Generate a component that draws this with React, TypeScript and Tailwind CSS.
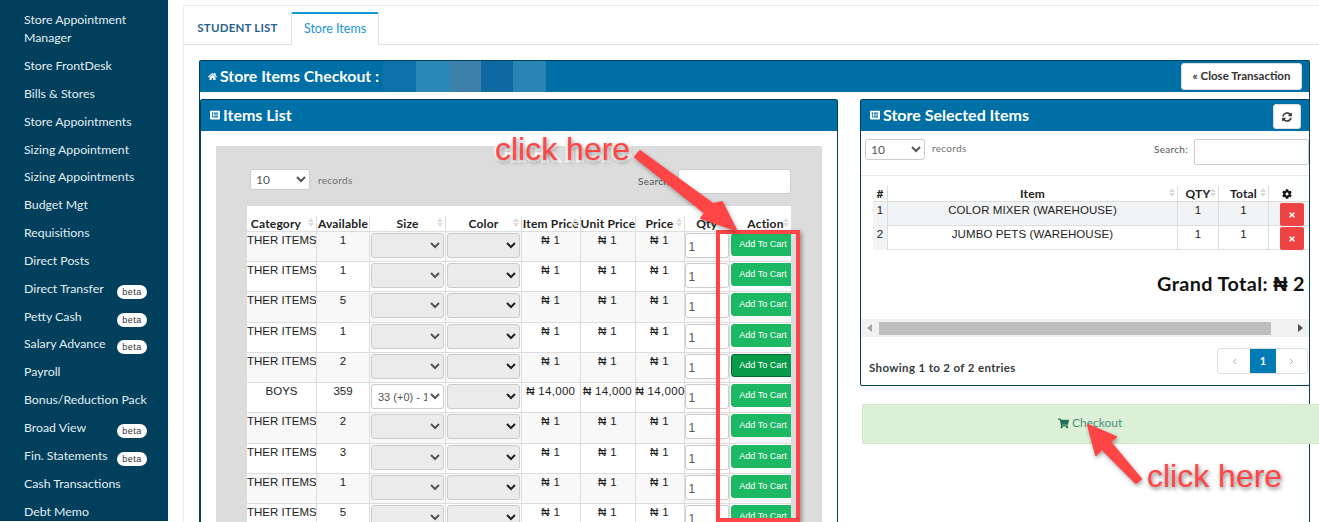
import { FaCog, FaHome, FaListAlt, FaShoppingCart, FaSyncAlt, FaTimes } from 'react-icons/fa';
import { ChevronLeft, ChevronRight } from 'lucide-react';

const sideItems = [
  { label: 'Store FrontDesk' },
  { label: 'Bills & Stores' },
  { label: 'Store Appointments' },
  { label: 'Sizing Appointment' },
  { label: 'Sizing Appointments' },
  { label: 'Budget Mgt' },
  { label: 'Requisitions' },
  { label: 'Direct Posts' },
  { label: 'Direct Transfer', beta: true },
  { label: 'Petty Cash', beta: true },
  { label: 'Salary Advance', beta: true },
  { label: 'Payroll' },
  { label: 'Bonus/Reduction Pack' },
  { label: 'Broad View', beta: true },
  { label: 'Fin. Statements', beta: true },
  { label: 'Cash Transactions' },
  { label: 'Debt Memo' },
];

const rows = [
  { cat: 'THER ITEMS', avail: '1', price: '₦ 1' },
  { cat: 'THER ITEMS', avail: '1', price: '₦ 1' },
  { cat: 'THER ITEMS', avail: '5', price: '₦ 1' },
  { cat: 'THER ITEMS', avail: '1', price: '₦ 1' },
  { cat: 'THER ITEMS', avail: '2', price: '₦ 1', active: true },
  { cat: 'BOYS', avail: '359', price: '₦ 14,000', size: '33 (+0) - 18,000' },
  { cat: 'THER ITEMS', avail: '2', price: '₦ 1' },
  { cat: 'THER ITEMS', avail: '3', price: '₦ 1' },
  { cat: 'THER ITEMS', avail: '1', price: '₦ 1' },
  { cat: 'THER ITEMS', avail: '5', price: '₦ 1' },
];

const itemCols = 'grid grid-cols-[70px_53px_76px_76px_58.5px_55px_49px_45.5px_61px]';
const selectedCols = 'grid grid-cols-[15px_290px_41px_50px_35px]';

const SortMark = () => (
  <span className="absolute right-[2px] top-[2px] flex flex-col gap-[1px]">
    <span className="h-0 w-0 border-x-[3px] border-b-[4px] border-x-transparent border-b-[#dcdcdc]" />
    <span className="h-0 w-0 border-x-[3px] border-t-[4px] border-x-transparent border-t-[#dcdcdc]" />
  </span>
);

const Head = ({ label, sort = true, className = '' }: { label: React.ReactNode; sort?: boolean; className?: string }) => (
  <div
    className={`relative h-[15px] border-r border-[#dddddd] pt-px text-center font-['Lato',sans-serif] text-[12px] leading-[14px] font-bold tracking-[0.2px] whitespace-nowrap text-[#222222] last:border-r-0 ${className}`}
  >
    {label}
    {sort && <SortMark />}
  </div>
);

const LengthSelect = ({ className }: { className: string }) => (
  <select
    defaultValue="10"
    className={`rounded-[3px] border border-[#cccccc] bg-white pl-px text-[12px] text-[#555555] ${className}`}
  >
    <option>10</option>
  </select>
);

const ItemRow = ({ row, index }: { row: (typeof rows)[number]; index: number }) => (
  <div
    className={`${itemCols} h-[30.25px] border-b border-[#dddddd] font-['Liberation_Sans',sans-serif] text-[11.5px] leading-[14px] text-[#222222] ${
      index % 2 === 0 ? 'bg-[#f8f8f8]' : 'bg-white'
    }`}
  >
    <div className="overflow-hidden border-r border-[#dddddd] pt-[1px] text-center whitespace-nowrap">{row.cat}</div>
    <div className="border-r border-[#dddddd] pt-[1px] text-center">{row.avail}</div>
    <div className="border-r border-[#dddddd] px-px pt-[1px]">
      <select
        disabled={!row.size}
        defaultValue={row.size}
        className={`h-[25px] w-full rounded-[3px] border border-[#cccccc] pl-[2px] text-[11px] text-[#555555] ${
          row.size ? 'bg-white' : 'bg-[#ebebeb]'
        }`}
      >
        {row.size && <option>{row.size}</option>}
      </select>
    </div>
    <div className="border-r border-[#dddddd] px-px pt-[1px]">
      <select disabled className="h-[25px] w-full rounded-[3px] border border-[#cccccc] bg-[#ebebeb]" />
    </div>
    <div className="border-r border-[#dddddd] pt-[1px] text-center tracking-[0.3px] whitespace-nowrap">{row.price}</div>
    <div className="border-r border-[#dddddd] pt-[1px] text-center tracking-[0.3px] whitespace-nowrap">{row.price}</div>
    <div className="border-r border-[#dddddd] pt-[1px] text-center tracking-[0.3px] whitespace-nowrap">{row.price}</div>
    <div className="border-r border-[#dddddd] pt-[1px]">
      <div className="h-[25px] rounded-[3px] border border-[#cccccc] bg-white pl-[3px] text-[12px] leading-[26px] text-[#555555]">1</div>
    </div>
    <div className="overflow-hidden pt-[1px] pl-px">
      <button
        className={`h-[23px] w-[64px] rounded-l-[3px] border text-center text-[9px] leading-[17px] text-white ${
          row.active ? 'border-[#056b33] bg-[#079a49]' : 'border-[#1db864] bg-[#1db864]'
        }`}
      >
        Add To Cart
      </button>
    </div>
  </div>
);

const PanelHeader = ({ children }: { children: React.ReactNode }) => (
  <div className="flex h-[31px] items-center bg-[#006fa6] pb-[2px] pl-[9px] font-['Lato',sans-serif] text-[16px] font-bold text-white">
    <FaListAlt className="mr-[3px] h-[10px] w-[10px]" />
    {children}
  </div>
);

const ClickHere = ({ className }: { className: string }) => (
  <div
    className={`absolute font-['Liberation_Sans',sans-serif] text-[32px] leading-[36px] whitespace-nowrap text-[#ff4545] [-webkit-text-stroke:5px_white] [paint-order:stroke_fill] [text-shadow:1px_2px_4px_rgba(0,0,0,0.55)] ${className}`}
  >
    click here
  </div>
);

export default function App() {
  return (
    <div className="relative flex h-[522px] w-[1319px] overflow-hidden bg-white font-['Lato',sans-serif]">
      {/* Sidebar */}
      <aside className="h-[521px] w-[168px] shrink-0 overflow-hidden bg-[#00405d] pt-[11px] pl-[24px] text-[12.3px] text-[#e4edf2]">
        <div className="h-[46px] leading-[18px]">
          Store Appointment
          <br />
          Manager
        </div>
        {sideItems.map((item) => (
          <div key={item.label} className="flex h-[27.85px] w-[123px] items-start justify-between leading-[18px] whitespace-nowrap">
            <span>{item.label}</span>
            {item.beta && (
              <span className="mt-[5px] h-[14px] w-[30px] rounded-full bg-white text-center font-['Liberation_Sans',sans-serif] text-[9px] leading-[14px] tracking-[0.5px] text-[#333333]">
                beta
              </span>
            )}
          </div>
        ))}
      </aside>

      {/* Main */}
      <main className="min-w-0 flex-1 pt-[5px] pl-[15px]">
        <div className="h-full w-[1200px] border-t border-l border-[#e8ecef] bg-white">
          <div className="flex h-[39px] items-end border-b border-[#dde2e6] pt-[6px]">
            <div className="flex h-[32px] w-[107px] items-center justify-center text-[11.5px] font-bold tracking-[0.2px] text-[#2a5f8f]">
              STUDENT LIST
            </div>
            <div className="-mb-px flex h-[33px] w-[88px] items-center justify-center rounded-t-[2px] border-x border-t-2 border-x-[#dde2e6] border-t-[#0d9ad6] bg-white text-[12.5px] text-[#1a95d6]">
              Store Items
            </div>
          </div>

          <div className="mt-[15px] ml-[15px] h-[480px] w-[1111px] rounded-t-[2px] border-x border-t border-[#00405d]">
            {/* Transaction header */}
            <div className="flex h-[31px] items-center bg-[#006fa6] pl-[8px] text-white">
              <FaHome className="mr-[3px] h-[9px] w-[9px]" />
              <span className="pb-[2px] text-[15.8px] font-bold">Store Items Checkout :</span>
              <div className="ml-[4px] flex h-[31px]">
                <div className="w-[33px] bg-[#0c72a9]" />
                <div className="w-[34px] bg-[#2b88b8]" />
                <div className="w-[31px] bg-[#3f80ab]" />
                <div className="w-[32px] bg-[#1068a3]" />
                <div className="w-[33px] bg-[#2a83b5]" />
              </div>
              <button className="mr-[7px] ml-auto h-[27px] w-[121px] rounded-[3px] border border-[#dddddd] bg-white pb-[1px] text-[11.5px] font-bold text-[#333333]">
                « Close Transaction
              </button>
            </div>

            <div className="mt-[7px] flex gap-[22px]">
              {/* Items list */}
              <section className="h-[430px] w-[638px] shrink-0 rounded-t-[2px] border border-[#00405d]">
                <PanelHeader>Items List</PanelHeader>
                <div className="mx-[15px] mt-[15px] h-[376px] w-[606px] bg-[#dcdcdc] pt-[23px] pl-[31px]">
                  <div className="relative flex h-[37px] w-[544px] items-start">
                    <LengthSelect className="ml-[3px] h-[21px] w-[60px]" />
                    <span className="mt-[4px] ml-[8px] text-[10px] tracking-[0.3px] text-[#6f6f6f]">records</span>
                    <span className="mt-[5px] ml-auto text-[10px] tracking-[0.3px] text-[#555555]">Search:</span>
                    <div className="ml-[6px] h-[25px] w-[113px] rounded-[3px] border border-[#cccccc] bg-white" />
                  </div>
                  <div className="w-[544px] bg-white">
                    <div className={`${itemCols} h-[25.75px] items-end border-b border-[#dddddd]`}>
                      <Head label="Category" className="pr-[11px]" />
                      <Head label="Available" sort={false} />
                      <Head label="Size" />
                      <Head label="Color" />
                      <Head label="Item Price" />
                      <Head label="Unit Price" sort={false} />
                      <Head label="Price" />
                      <Head label="Qty" sort={false} />
                      <Head label="Action" className="pl-[10px]" />
                    </div>
                    {rows.map((row, index) => (
                      <ItemRow key={index} row={row} index={index} />
                    ))}
                  </div>
                </div>
              </section>

              <div className="w-[451px] shrink-0">
                {/* Selected items */}
                <section className="h-[287px] w-[450px] rounded-[2px] border border-[#00405d]">
                  <div className="relative">
                    <PanelHeader>Store Selected Items</PanelHeader>
                    <button className="absolute top-[4px] right-[8px] flex h-[25px] w-[28px] items-center justify-center rounded-[3px] border border-[#dddddd] bg-white text-[#333333]">
                      <FaSyncAlt className="h-[10px] w-[10px]" />
                    </button>
                  </div>
                  <div className="flex h-[45px] items-start border-b border-[#e6eaed] pt-[8px] pl-[4px]">
                    <LengthSelect className="h-[21px] w-[60px]" />
                    <span className="mt-[2px] ml-[7px] text-[10px] tracking-[0.3px] text-[#6f6f6f]">records</span>
                    <span className="mt-[3px] ml-auto text-[10px] tracking-[0.3px] text-[#555555]">Search:</span>
                    <div className="ml-[6px] h-[26px] w-[115px] rounded-[3px] border border-[#cccccc] bg-white" />
                  </div>
                  <div className="pt-[10px] pl-[12px] font-['Liberation_Sans',sans-serif] text-[11.5px] leading-[14px] tracking-[0.1px] text-[#222222]">
                    <div className={`${selectedCols} h-[16px] border-b border-[#dddddd]`}>
                      <Head label="#" sort={false} />
                      <Head label="Item" />
                      <Head label="QTY" />
                      <Head label="Total" />
                      <Head label={<FaCog className="mx-auto mt-[2px] h-[10px] w-[10px] text-[#111111]" />} sort={false} />
                    </div>
                    {['COLOR MIXER (WAREHOUSE)', 'JUMBO PETS (WAREHOUSE)'].map((name, i) => (
                      <div
                        key={name}
                        className={`${selectedCols} h-[24px] border-b border-[#dddddd] ${i === 0 ? 'bg-[#f2f3f4]' : 'bg-white'}`}
                      >
                        <div className="border-r border-[#dddddd] bg-[#f2f3f4] pt-px text-center">{i + 1}</div>
                        <div className="border-r border-[#dddddd] pt-px text-center">{name}</div>
                        <div className="border-r border-[#dddddd] pt-px text-center">1</div>
                        <div className="border-r border-[#dddddd] pt-px text-center">1</div>
                        <div className="pl-[11px]">
                          <button className="mt-px flex h-[23px] w-[24px] items-center justify-center rounded-[2px] bg-[#ef4444] text-white">
                            <FaTimes className="h-[8px] w-[8px]" />
                          </button>
                        </div>
                      </div>
                    ))}
                  </div>
                  <div className="mt-[21px] pr-[4px] text-right text-[19.8px] leading-[24px] font-bold tracking-[0.4px] text-[#111111]">
                    Grand Total: <span className="font-['Liberation_Sans',sans-serif]">₦</span> 2
                  </div>
                  {/* Scrollbar */}
                  <div className="mt-[23px] flex h-[18px] items-center bg-[#f1f1f1] pl-[6px]">
                    <span className="h-0 w-0 border-y-[4px] border-r-[5px] border-y-transparent border-r-[#a3a3a3]" />
                    <div className="ml-[7px] h-[13px] w-[392px] bg-[#bdbdbd]" />
                    <span className="mr-[6px] ml-auto h-0 w-0 border-y-[4px] border-l-[5px] border-y-transparent border-l-[#505050]" />
                  </div>
                  <div className="relative h-[48px]">
                    <div className="absolute top-[11px] right-px flex h-[26px] overflow-hidden rounded-[3px] border border-[#dddddd] text-[#888888]">
                      <div className="flex w-[32px] items-center justify-center">
                        <ChevronLeft className="h-[9px] w-[9px]" strokeWidth={2} />
                      </div>
                      <div className="flex w-[26px] items-center justify-center bg-[#007bb6] text-[11px] font-bold text-white">1</div>
                      <div className="flex w-[31px] items-center justify-center">
                        <ChevronRight className="h-[9px] w-[9px]" strokeWidth={2} />
                      </div>
                    </div>
                    <div className="absolute top-[22px] left-[8px] text-[11.5px] font-bold tracking-[0.35px] text-[#333a40]">
                      Showing 1 to 2 of 2 entries
                    </div>
                  </div>
                </section>

                {/* Checkout */}
                <div className="mt-[18px] ml-[2px] flex h-[40px] w-[470px] items-center rounded-[2px] border border-[#cfe8c6] bg-[#dcf0d8] pb-[2px] pl-[195px] text-[12px] text-[#4a917a]">
                  <FaShoppingCart className="mr-[3px] h-[11px] w-[11px] text-[#1f7050]" />
                  Checkout
                </div>
              </div>
            </div>
          </div>
        </div>
      </main>

      {/* Annotations drawn over the page */}
      <div className="absolute top-[230px] left-[716px] h-[292px] w-[84px] border-4 border-[#ff4545] shadow-[2px_2px_4px_rgba(0,0,0,0.35)]" />
      <svg className="absolute top-0 left-0 drop-shadow-[1px_2px_2px_rgba(0,0,0,0.35)]" width="1319" height="522" viewBox="0 0 1319 522">
        <polygon points="640,151 713,204 722,202 736,230 701,218 705,213 635,157" fill="#ff4545" stroke="#ff4545" strokeWidth="2" strokeLinejoin="round" />
        <polygon points="1088,425 1116,437 1110,442 1141,479 1136,483 1102,449 1096,455" fill="#ff4545" stroke="#ff4545" strokeWidth="2" strokeLinejoin="round" />
      </svg>
      <ClickHere className="top-[131px] left-[495px]" />
      <ClickHere className="top-[458px] left-[1147px]" />
    </div>
  );
}
